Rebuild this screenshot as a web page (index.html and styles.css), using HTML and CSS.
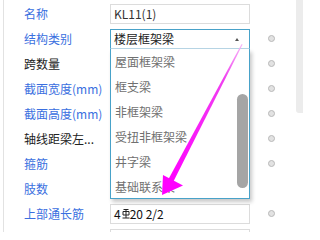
FILE: index.html
```html
<!DOCTYPE html>
<html lang="zh">
<head>
<meta charset="utf-8">
<link rel="stylesheet" href="styles.css">
</head>
<body>
<div class="page">
  <div class="content">
    <div class="row">
      <span class="label blue">名称</span>
      <div class="field"><div class="input">KL11(1)</div></div>
      <span class="slot"></span>
    </div>
    <div class="row">
      <span class="label blue">结构类别</span>
      <div class="field">
        <div class="select">楼层框架梁<span class="caret"></span></div>
        <div class="dropdown">
          <div class="item">屋面框架梁</div>
          <div class="item">框支梁</div>
          <div class="item">非框架梁</div>
          <div class="item">受扭非框架梁</div>
          <div class="item">井字梁</div>
          <div class="item">基础联系梁</div>
          <div class="thumb"></div>
        </div>
      </div>
      <span class="slot"><span class="radio"></span></span>
    </div>
    <div class="row">
      <span class="label">跨数量</span>
      <div class="field"><div class="input"></div></div>
      <span class="slot"><span class="radio"></span></span>
    </div>
    <div class="row">
      <span class="label blue">截面宽度(mm)</span>
      <div class="field"><div class="input"></div></div>
      <span class="slot"><span class="radio"></span></span>
    </div>
    <div class="row">
      <span class="label blue">截面高度(mm)</span>
      <div class="field"><div class="input"></div></div>
      <span class="slot"><span class="radio"></span></span>
    </div>
    <div class="row">
      <span class="label">轴线距梁左...</span>
      <div class="field"><div class="input"></div></div>
      <span class="slot"><span class="radio"></span></span>
    </div>
    <div class="row">
      <span class="label blue">箍筋</span>
      <div class="field"><div class="input"></div></div>
      <span class="slot"><span class="radio"></span></span>
    </div>
    <div class="row">
      <span class="label blue">肢数</span>
      <div class="field"><div class="input"></div></div>
      <span class="slot"></span>
    </div>
    <div class="row">
      <span class="label blue">上部通长筋</span>
      <div class="field"><div class="input dark">4<svg class="rebar" width="8" height="11" viewBox="0 0 8 11"><path d="M1.5 1.5H6.5M1 3.5H7V7H1ZM4 1.5V10M0.5 10H7.5" fill="none" stroke="#222" stroke-width="1"/></svg>20 2/2</div></div>
      <span class="slot"><span class="radio"></span></span>
    </div>
    <div class="row">
      <span class="label blue"></span>
      <div class="field"><div class="input"></div></div>
      <span class="slot"><span class="radio"></span></span>
    </div>
  </div>
  <div class="vscroll"></div>
  <svg class="arrow" width="303" height="232" viewBox="0 0 303 232">
    <defs>
      <linearGradient id="ag" x1="242" y1="44" x2="170" y2="182" gradientUnits="userSpaceOnUse">
        <stop offset="0" stop-color="#f7b8f7"/>
        <stop offset="0.25" stop-color="#f040f0"/>
        <stop offset="1" stop-color="#ff00ff"/>
      </linearGradient>
    </defs>
    <polygon points="241.6,44 242.6,44.6 172.4,183.4 167.6,180.8" fill="url(#ag)"/>
    <polygon points="162,195 163,175 183,185.5" fill="#ff00ff"/>
  </svg>
</div>
</body>
</html>
```

FILE: styles.css
```css
html, body {
  margin: 0;
  padding: 0;
  background: #ffffff;
}
.page {
  position: relative;
  width: 303px;
  height: 232px;
  overflow: hidden;
  display: flex;
  align-items: flex-start;
  padding-left: 3px;
  box-sizing: border-box;
  font-family: "Noto Sans CJK SC", "Noto Sans", sans-serif;
  font-size: 12px;
}
.content {
  width: 293px;
  height: 260px;
  border-left: 1px solid #e2e2e2;
  padding-top: 1px;
  box-sizing: border-box;
}
.row {
  display: grid;
  grid-template-columns: 86px 140px 46px;
  align-items: center;
  height: 25px;
  padding-left: 20px;
}
.label {
  color: #222222;
  white-space: nowrap;
  line-height: 16px;
}
.label.blue {
  color: #3a6fe0;
}
.field {
  position: relative;
  height: 20px;
}
.input {
  height: 20px;
  box-sizing: border-box;
  border: 1px solid #dcdcdc;
  padding-left: 3px;
  line-height: 18px;
  color: #333333;
  display: flex;
  align-items: center;
}
.input.dark {
  color: #111111;
}
.rebar {
  margin: 0 0 1px 1px;
}
.select {
  position: relative;
  height: 20px;
  box-sizing: border-box;
  border: 1px solid #48a2c9;
  border-bottom-color: #b8d6e6;
  padding-left: 3px;
  line-height: 18px;
  color: #222222;
}
.caret {
  position: absolute;
  right: 10px;
  top: 8px;
  width: 0;
  height: 0;
  border-left: 2.5px solid transparent;
  border-right: 2.5px solid transparent;
  border-bottom: 3px solid #555555;
}
.dropdown {
  position: absolute;
  left: 0;
  top: 20px;
  width: 140px;
  height: 150px;
  box-sizing: border-box;
  background: #ffffff;
  border: 1px solid #48a2c9;
  border-top: none;
  box-shadow: 2px 3px 4px rgba(0, 0, 0, 0.22);
  z-index: 2;
}
.item {
  height: 25px;
  line-height: 25px;
  padding-left: 4px;
  color: #707070;
}
.thumb {
  position: absolute;
  right: 1px;
  top: 45px;
  width: 11px;
  height: 94px;
  border-radius: 6px;
  background: #a5a5a5;
}
.slot {
  display: flex;
  align-items: center;
  padding-left: 18px;
}
.radio {
  width: 7px;
  height: 7px;
  box-sizing: border-box;
  border-radius: 50%;
  background: #e2e2e2;
  border: 1px solid #b9b9b9;
}
.vscroll {
  margin-left: 0;
  width: 7px;
  height: 113px;
  background: #ececec;
  border-bottom-left-radius: 3px;
}
.arrow {
  position: absolute;
  left: 0;
  top: 0;
  pointer-events: none;
  z-index: 5;
}
```
